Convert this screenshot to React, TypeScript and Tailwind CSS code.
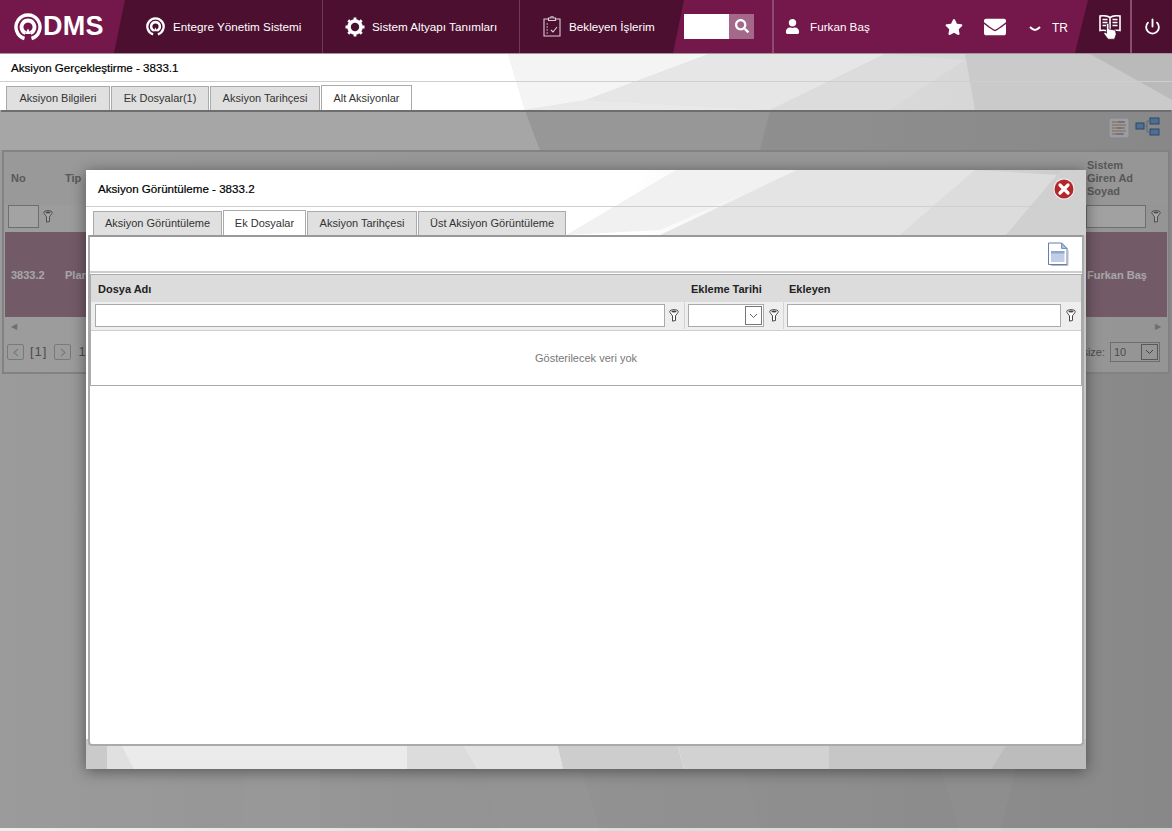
import { Power } from "lucide-react";
import { FaStar, FaUser, FaEnvelope, FaSearch } from "react-icons/fa";

const pagePolys: [string, string][] = [
  ["0,54 508,54 525,110 540,150 0,150", "#ffffff"],
  ["508,54 709,54 586,100 525,110", "#f4f4f4"],
  ["525,110 586,100 770,110 760,150 540,150", "#e9e9e9"],
  ["709,54 885,54 770,110 586,100", "#e6e6e6"],
  ["885,54 965,60 890,110 770,110", "#dcdcdc"],
  ["965,54 1090,54 1172,100 1172,110 975,110", "#cacaca"],
  ["1090,54 1172,54 1172,100", "#bababa"],
  ["260,640 320,640 320,831 240,831", "#eaeaea"],
  ["420,600 530,600 600,831 500,831", "#e4e4e4"],
  ["640,600 700,600 760,831 700,831", "#dedede"],
  ["900,640 1050,640 1000,831 960,831", "#dadada"],
];

const modalPolys: [string, string][] = [
  ["590,0 711,0 574,60 480,65", "#f1f1f1"],
  ["711,0 889,0 814,65 574,65", "#e4e4e4"],
  ["889,0 975,5 920,65 814,65", "#dcdcdc"],
  ["975,0 1000,0 1000,65 920,65", "#d0d0d0"],
  ["0,570 21,570 21,600 0,600", "#cacaca"],
  ["21,570 321,570 321,600 21,600", "#ebebeb"],
  ["21,570 32,570 48,600 21,600", "#e0e0e0"],
  ["321,570 374,570 392,600 321,600", "#dcdcdc"],
  ["374,570 470,570 477,600 392,600", "#e2e2e2"],
  ["470,570 590,570 598,600 477,600", "#cdcdcd"],
  ["590,570 743,570 743,600 598,600", "#d2d2d2"],
  ["743,570 924,570 905,600 743,600", "#c6c6c6"],
  ["924,570 1000,570 1000,600 905,600", "#bcbcbc"],
];

function PolyBg({ id, w, h, polys, from, to, start }: { id: string; w: number; h: number; polys: [string, string][]; from: string; to: string; start: number }) {
  return (
    <svg className="absolute inset-0 w-full h-full" viewBox={`0 0 ${w} ${h}`} preserveAspectRatio="none">
      <defs>
        <linearGradient id={id} x1="0" x2="1" y1="0" y2="0">
          <stop offset={start} stopColor={from} />
          <stop offset="1" stopColor={to} />
        </linearGradient>
      </defs>
      <rect width={w} height={h} fill={`url(#${id})`} />
      {polys.map(([p, c]) => (
        <polygon key={p} points={p} fill={c} />
      ))}
    </svg>
  );
}

function QMark({ size }: { size: number }) {
  return (
    <svg width={size} height={size} viewBox="0 0 28 28" fill="none" stroke="white" className="shrink-0">
      <path d="M10.500 25.500A12 12 0 1 1 17.500 25.500" strokeWidth="3.400" />
      <path d="M11.500 20A6.500 6.500 0 1 1 16.500 20" strokeWidth="3.800" />
      <path d="M14 15.500l-3 5.500h6z" fill="white" stroke="none" />
    </svg>
  );
}

function GearIcon() {
  return (
    <svg width="20" height="20" viewBox="0 0 20 20" fill="none" stroke="white" className="shrink-0">
      <circle cx="10" cy="10" r="6" strokeWidth="3.600" />
      <path d="M10 .5v3M10 16.500v3M.5 10h3M16.500 10h3M3.300 3.300l2.100 2.100M14.600 14.600l2.100 2.100M3.300 16.700l2.100-2.100M14.600 5.400l2.100-2.100" strokeWidth="2.800" />
    </svg>
  );
}

function ClipboardIcon() {
  return (
    <svg width="18" height="21" viewBox="0 0 18 21" fill="none" stroke="#dcced5" strokeWidth="1.100" className="shrink-0">
      <path d="M5.500 3H1v17h16V3h-4.500" />
      <path d="M5.500 4.500V2h2.500V.8h2V2h2.500v2.500z" />
      <path d="M3.500 8h1.500M3.500 11h1.500M3.500 14h1.500M3.500 17h1.500M8 14l2 2 4-5" />
    </svg>
  );
}

function BookIcon() {
  return (
    <svg width="22" height="19" viewBox="0 0 22 19" fill="none" stroke="white" strokeWidth="1.600">
      <path d="M11 2.500C9 1 5 .5 1 1v14.500c4-.5 8 0 10 1.500 2-1.500 6-2 10-1.500V1C17 .5 13 1 11 2.500zM11 2.500V17" />
      <path d="M3.500 4.500h5M3.500 7.500h5M3.500 10.500h5M13.500 4.500h5M13.500 7.500h5M13.500 10.500h5" strokeWidth="1.300" />
    </svg>
  );
}

function HandCursor() {
  return (
    <svg width="15" height="17" viewBox="0 0 15 17" className="absolute left-[4px] top-[8px]">
      <path d="M3.500 1.500a1.200 1.200 0 0 1 2.400 0V6l6.500 1.200.8 4-1.700 5H5L.8 10.500l1.200-1.200 1.500 1z" fill="white" stroke="#3a0a24" strokeWidth="0.700" />
    </svg>
  );
}

function FilterIcon({ dim }: { dim?: boolean }) {
  const c = dim ? "#777" : "#444";
  return (
    <svg width="10" height="13" viewBox="0 0 10 13" fill="none" className="shrink-0">
      <path d="M.8 2.500C.8 1.300 2.500.7 5 .7s4.200.6 4.200 1.800c0 1.500-2.200 3.300-2.700 4.300v4.700l-3 .6V6.800C3 5.800.8 4 .8 2.500z" fill="white" stroke={c} strokeWidth="1" />
      <ellipse cx="5" cy="2.600" rx="2.600" ry="1" fill={c} />
    </svg>
  );
}

function SelectArrow() {
  return (
    <svg width="9" height="6" viewBox="0 0 9 6" fill="none" stroke="#666" strokeWidth="1">
      <path d="M1 1l3.500 3.500L8 1" />
    </svg>
  );
}

function PagerChevron({ left }: { left?: boolean }) {
  return (
    <div className="w-[17px] h-[16px] border border-[#bbb] rounded-[2px] flex items-center justify-center">
      <svg width="6" height="9" viewBox="0 0 6 9" fill="none" stroke="#bbb" strokeWidth="1.200">
        <path d={left ? "M5 1L1 4.500 5 8" : "M1 1l4 3.500L1 8"} />
      </svg>
    </div>
  );
}

function FileIcon() {
  return (
    <svg width="22" height="24" viewBox="0 0 22 24" className="shrink-0">
      <path d="M1.500 1h13l5.500 5.500v16h-18.500z" fill="white" stroke="#5f7fb5" strokeWidth="1" />
      <path d="M14.500 1v5.500H20z" fill="#a9c0e4" stroke="#5f7fb5" strokeWidth="0.800" />
      <rect x="4" y="9" width="13.500" height="11" fill="#c2cee6" />
      <rect x="4" y="9" width="13.500" height="2.500" fill="#8fa6cf" />
      <path d="M21 8v15.500H4" fill="none" stroke="#bbb" strokeWidth="1" />
    </svg>
  );
}

function CloseIcon() {
  return (
    <svg width="22" height="22" viewBox="0 0 22 22">
      <circle cx="11" cy="11" r="10.500" fill="#fff" opacity="0.7" />
      <circle cx="11" cy="11" r="9.500" fill="#b3262c" />
      <path d="M7 7l8 8M15 7l-8 8" stroke="white" strokeWidth="3.200" strokeLinecap="round" />
    </svg>
  );
}

function ListIcon() {
  return (
    <svg width="23" height="22" viewBox="0 0 23 22">
      <rect x="1" y="1" width="20" height="20" rx="2" fill="#eef2f8" stroke="#c4cedd" />
      <path d="M4 5h12M4 8h14M4 11h10M4 14h14M4 17h11" stroke="#d59a7a" strokeWidth="1" />
      <path d="M10 5h7M9 11h8M8 17h8" stroke="#8e9bb2" strokeWidth="1" />
    </svg>
  );
}

function TreeIcon() {
  return (
    <svg width="25" height="20" viewBox="0 0 25 20" fill="none">
      <rect x="1" y="6" width="8" height="6" fill="#7ba9df" stroke="#3e6ea8" />
      <rect x="15" y="1" width="9" height="6" fill="#7ba9df" stroke="#3e6ea8" />
      <rect x="15" y="12" width="9" height="6" fill="#7ba9df" stroke="#3e6ea8" />
      <path d="M9 9h3M12 4v11M12 4h3M12 15h3" stroke="#8ea0b8" />
    </svg>
  );
}

function Tab({ label, active, width }: { label: string; active?: boolean; width: string }) {
  return (
    <div
      className={`${width} shrink-0 flex items-center justify-center border border-[#aaa] border-b-0 text-[11px] text-[#333] ${
        active ? "h-[25px] bg-white relative z-10" : "h-[24px] bg-[#e0e0e0]"
      }`}
    >
      {label}
    </div>
  );
}

export default function App() {
  return (
    <div className="relative w-[1172px] h-[831px] overflow-hidden bg-white font-['Liberation_Sans',sans-serif]">
      <PolyBg id="page" w={1172} h={831} polys={pagePolys} from="#eeeeee" to="#d2d2d2" start={0} />

      <header className="relative flex h-[54px] bg-[#74174a] border-b border-[#9a9a9a] text-white text-[11.7px]">
        <div className="w-[114px] shrink-0 flex items-center pl-[14px] gap-[1px]">
          <QMark size={28} />
          <span className="font-bold text-[27px] leading-none tracking-[0.2px]">DMS</span>
        </div>
        <div className="w-[570px] shrink-0 bg-[#4c0f30] flex [clip-path:polygon(11px_0,100%_0,calc(100%-11px)_100%,0_100%)]">
          <div className="w-[209px] shrink-0 flex items-center pl-[32px] gap-[8px] border-r border-[#6b3a55]">
            <QMark size={19} />
            <span>Entegre Yönetim Sistemi</span>
          </div>
          <div className="w-[197px] shrink-0 flex items-center pl-[22px] gap-[7px] border-r border-[#6b3a55]">
            <GearIcon />
            <span>Sistem Altyapı Tanımları</span>
          </div>
          <div className="flex-1 flex items-center pl-[23px] gap-[8px]">
            <ClipboardIcon />
            <span>Bekleyen İşlerim</span>
          </div>
        </div>
        <div className="flex-1 flex items-center">
          <div className="flex w-[70px] h-[25px] shrink-0 -mt-[1px]">
            <div className="w-[45px] bg-white" />
            <div className="flex-1 bg-[#a4688a] flex items-center justify-center">
              <FaSearch size={14} />
            </div>
          </div>
          <div className="ml-[18px] w-[2px] h-full bg-[#8e4a70] shrink-0" />
          <FaUser size={15} className="ml-[11px] shrink-0" />
          <span className="ml-[10px] w-[135px] shrink-0">Furkan Baş</span>
          <FaStar size={18} className="shrink-0" />
          <FaEnvelope size={22} className="ml-[21px] shrink-0" />
          <svg width="12" height="6" viewBox="0 0 12 6" fill="none" stroke="white" strokeWidth="2" className="ml-[23px] mt-[4px] shrink-0">
            <path d="M1 1c2 2 3 3 5 3s3-1 5-3" />
          </svg>
          <span className="ml-[11px] mt-[2px] text-[12px]">TR</span>
        </div>
        <div className="w-[97px] shrink-0 bg-[#4c0f30] flex [clip-path:polygon(13px_0,100%_0,100%_100%,0_100%)]">
          <div className="w-[57px] shrink-0 border-r-2 border-[#8e4a70] pl-[24px] pt-[15px]">
            <div className="relative">
              <BookIcon />
              <HandCursor />
            </div>
          </div>
          <div className="flex-1 flex items-center justify-center">
            <Power size={17} strokeWidth={2.600} />
          </div>
        </div>
      </header>

      <div className="relative h-[28px] flex items-center pl-[11px] border-b border-[#cfcfcf] text-[11.6px] [-webkit-text-stroke:0.2px_black] text-black">
        Aksiyon Gerçekleştirme - 3833.1
      </div>

      <div className="relative h-[28px] flex items-end gap-[1px] pl-[6px]">
        <Tab label="Aksiyon Bilgileri" width="w-[104px]" />
        <Tab label="Ek Dosyalar(1)" width="w-[98px]" />
        <Tab label="Aksiyon Tarihçesi" width="w-[110px]" />
        <Tab label="Alt Aksiyonlar" active width="w-[91px]" />
      </div>

      <main className="relative mx-[1px] h-[719px] border-t-2 border-[#aaa] px-[1px]">
        <div className="h-[38px] flex items-start justify-end gap-[4px] pt-[5px] pr-[10px]">
          <ListIcon />
          <TreeIcon />
        </div>
        <section className="h-[224px] border-2 border-[#c8c8c8] bg-[#f2f2f2]/60 text-[11px] text-[#777] px-[1px] flex flex-col">
          <div className="h-[53px] flex items-center font-bold text-[#888] bg-[#e8e8e8]/60">
            <span className="w-[60px] pl-[6px]">No</span>
            <span className="flex-1">Tip</span>
            <span className="w-[80px] leading-[13px] pr-[20px]">Sistem Giren Ad Soyad</span>
          </div>
          <div className="h-[27px] flex items-start">
            <div className="w-[31px] h-[23px] ml-[3px] border border-[#aaa] bg-white/70" />
            <div className="ml-[4px] mt-[5px]"><FilterIcon dim /></div>
            <div className="flex-1" />
            <div className="w-[60px] h-[23px] border border-[#aaa] bg-white/70" />
            <div className="ml-[5px] mr-[6px] mt-[5px]"><FilterIcon dim /></div>
          </div>
          <div className="h-[85px] pt-[1px] flex items-center bg-[#b08c9f] text-white text-[11px] font-semibold">
            <span className="w-[54px] pl-[6px]">3833.2</span>
            <span className="flex-1 pl-[6px]">Plan</span>
            <span className="w-[80px]">Furkan Baş</span>
          </div>
          <div className="h-[20px] flex items-center justify-between px-[6px] text-[8px] text-[#aaa]">
            <span>◀</span>
            <span>▶</span>
          </div>
          <div className="h-[29px] pt-[1px] flex items-center px-[2px] text-[#777]">
            <PagerChevron left />
            <span className="ml-[6px] text-[13px] tracking-[1px]">[1]</span>
            <div className="ml-[7px]"><PagerChevron /></div>
            <span className="ml-[7px] flex-1 text-[13px]">1</span>
            <span>size:</span>
            <div className="ml-[5px] mr-[5px] w-[50px] h-[20px] border border-[#aaa] flex items-center justify-between pl-[3px] pr-[1px] text-[11px]">
              10
              <div className="w-[17px] h-[16px] border border-[#888] flex items-center justify-center"><SelectArrow /></div>
            </div>
          </div>
        </section>
      </main>

      <div className="absolute left-0 right-0 top-[110px] h-[718px] bg-black/35" />

      <div className="absolute left-[86px] top-[170px] w-[1000px] h-[599px] shadow-[0_2px_14px_rgba(0,0,0,0.45)] flex flex-col">
        <PolyBg id="modal" w={1000} h={600} polys={modalPolys} from="#ffffff" to="#c8c8c8" start={0.55} />
        <div className="relative h-[37px] shrink-0 flex items-center justify-between pt-[1px] pl-[12px] pr-[11px] border-b border-[#cfcfcf] text-[11.6px] [-webkit-text-stroke:0.2px_black] text-black">
          Aksiyon Görüntüleme - 3833.2
          <CloseIcon />
        </div>
        <div className="relative h-[28px] shrink-0 flex items-end gap-[1px] pl-[7px]">
          <Tab label="Aksiyon Görüntüleme" width="w-[129px]" />
          <Tab label="Ek Dosyalar" active width="w-[83px]" />
          <Tab label="Aksiyon Tarihçesi" width="w-[110px]" />
          <Tab label="Üst Aksiyon Görüntüleme" width="w-[148px]" />
        </div>
        <div className="relative mx-[2px] h-[511px] shrink-0 bg-white border-2 border-[#aaa] border-t-[#999] rounded-b-[4px]">
          <div className="h-[36px] flex items-center justify-end pr-[13px] border-b-2 border-[#ccc]">
            <FileIcon />
          </div>
          <div className="mt-[1px] h-[112px] border border-[#aaa] text-[11px]">
            <div className="h-[27px] pt-[1px] flex items-center bg-[#dcdcdc] font-bold text-[#222]">
              <span className="w-[593px] pl-[7px]">Dosya Adı</span>
              <span className="w-[99px] pl-[7px]">Ekleme Tarihi</span>
              <span className="pl-[6px]">Ekleyen</span>
            </div>
            <div className="h-[29px] pb-[1px] flex bg-[#eeeeee] border-b border-[#cfcfcf]">
              <div className="w-[594px] flex items-center pl-[4px] border-r border-[#d4d4d4]">
                <div className="w-[570px] h-[23px] bg-white border border-[#aaa]" />
                <div className="ml-[4px]"><FilterIcon /></div>
              </div>
              <div className="w-[99px] flex items-center pl-[3px] border-r border-[#d4d4d4]">
                <div className="w-[76px] h-[23px] bg-white border border-[#aaa] flex items-center justify-end pr-[1px]">
                  <div className="w-[17px] h-[19px] border border-[#777] flex items-center justify-center"><SelectArrow /></div>
                </div>
                <div className="ml-[5px]"><FilterIcon /></div>
              </div>
              <div className="flex-1 flex items-center pl-[3px]">
                <div className="w-[274px] h-[23px] bg-white border border-[#aaa]" />
                <div className="ml-[5px]"><FilterIcon /></div>
              </div>
            </div>
            <div className="h-[54px] flex items-center justify-center text-[#777] text-[11px]">Gösterilecek veri yok</div>
          </div>
        </div>
      </div>
    </div>
  );
}
